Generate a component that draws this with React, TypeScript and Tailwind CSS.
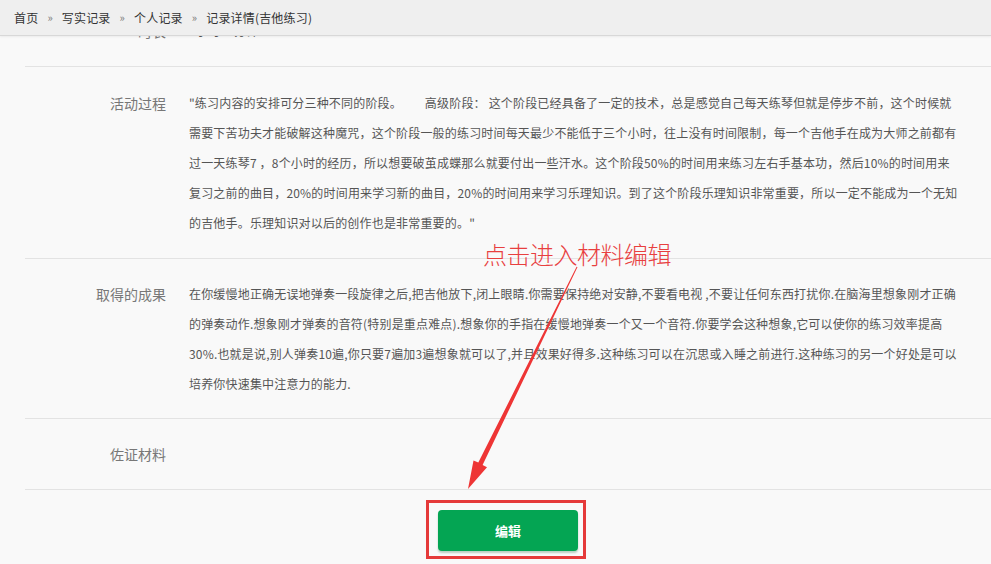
import React from 'react';

interface Row {
  label: string;
  lines: string[];
  pad: string;
}

const rows: Row[] = [
  { label: '时长', lines: ['1小时30分钟'], pad: 'pt-[16px] pb-[20px]' },
  {
    label: '活动过程',
    pad: 'pt-[21px] pb-[20px]',
    lines: [
      '"练习内容的安排可分三种不同的阶段。\u00a0\u00a0\u00a0\u00a0\u00a0\u00a0\u00a0\u00a0高级阶段： 这个阶段已经具备了一定的技术，总是感觉自己每天练琴但就是停步不前，这个时候就',
      '需要下苦功夫才能破解这种魔咒，这个阶段一般的练习时间每天最少不能低于三个小时，往上没有时间限制，每一个吉他手在成为大师之前都有',
      '过一天练琴7 ，8个小时的经历，所以想要破茧成蝶那么就要付出一些汗水。这个阶段50%的时间用来练习左右手基本功，然后10%的时间用来',
      '复习之前的曲目，20%的时间用来学习新的曲目，20%的时间用来学习乐理知识。到了这个阶段乐理知识非常重要，所以一定不能成为一个无知',
      '的吉他手。乐理知识对以后的创作也是非常重要的。"',
    ],
  },
  {
    label: '取得的成果',
    pad: 'pt-[20px] pb-[19px]',
    lines: [
      '在你缓慢地正确无误地弹奏一段旋律之后,把吉他放下,闭上眼睛.你需要保持绝对安静,不要看电视 ,不要让任何东西打扰你.在脑海里想象刚才正确',
      '的弹奏动作.想象刚才弹奏的音符(特别是重点难点).想象你的手指在缓慢地弹奏一个又一个音符.你要学会这种想象,它可以使你的练习效率提高',
      '30%.也就是说,别人弹奏10遍,你只要7遍加3遍想象就可以了,并且效果好得多.这种练习可以在沉思或入睡之前进行.这种练习的另一个好处是可以',
      '培养你快速集中注意力的能力.',
    ],
  },
  { label: '佐证材料', lines: [], pad: 'pt-[20px] pb-[20px]' },
];

const crumbs = ['首页', '写实记录', '个人记录', '记录详情(吉他练习)'];

export default function App() {
  return (
    <div className="relative w-[991px] h-[564px] overflow-hidden bg-[#f9f9f9] font-['Noto_Sans_CJK_SC','Noto_Sans',sans-serif]">
      {/* Breadcrumb bar (overlays the scrolled content) */}
      <header className="absolute top-0 left-0 right-0 z-10 h-[36px] bg-[#efefef] border-b border-[#d8d8d8] shadow-[0_1px_2px_rgba(0,0,0,0.06)] flex items-center pl-[14px] gap-[9px] text-[12px] tracking-[0.18px] text-[#333]">
        {crumbs.map((c, i) => (
          <React.Fragment key={c}>
            {i > 0 && <span className="text-[#777] text-[11px]">»</span>}
            <span>{c}</span>
          </React.Fragment>
        ))}
      </header>

      {/* Detail rows */}
      <div className="ml-[25px]">
        {rows.map((row) => (
          <div key={row.label} className={`flex border-b border-[#e3e3e3] ${row.pad}`}>
            <div className="w-[141px] shrink-0 text-right text-[14px] leading-[30px] text-[#777]">{row.label}</div>
            <div className="ml-[23px] text-[12px] leading-[30px] tracking-[0.18px] text-[#555] whitespace-nowrap">
              {row.lines.length === 0 ? <div className="h-[30px]" /> : row.lines.map((l, j) => <div key={j}>{l}</div>)}
            </div>
          </div>
        ))}

        <div className="flex justify-center pt-[20px]">
          <div className="relative">
            <button className="w-[140px] h-[41px] rounded-[4px] bg-[#04a553] text-white text-[13px] font-bold shadow-[0_2px_2px_rgba(0,80,30,0.25)]">
              编辑
            </button>
            {/* annotation frame */}
            <div className="absolute -left-[12px] -right-[8px] -top-[10px] -bottom-[8px] border-[3px] border-[#e53a3a] pointer-events-none" />
          </div>
        </div>
      </div>

      {/* annotation text */}
      <div className="absolute left-[483px] top-[240px] text-[24px] leading-[28px] font-light text-[#e8403f] tracking-[-0.5px]">
        点击进入材料编辑
      </div>

      {/* annotation arrow */}
      <svg className="absolute top-0 left-0 pointer-events-none" width="991" height="564" viewBox="0 0 991 564">
        <polygon
          points="577.5,267 576.6,266.8 478.3,462.6 473.5,460.4 468,489 487,467.2 482.6,465"
          fill="#ee3535"
        />
      </svg>
    </div>
  );
}
